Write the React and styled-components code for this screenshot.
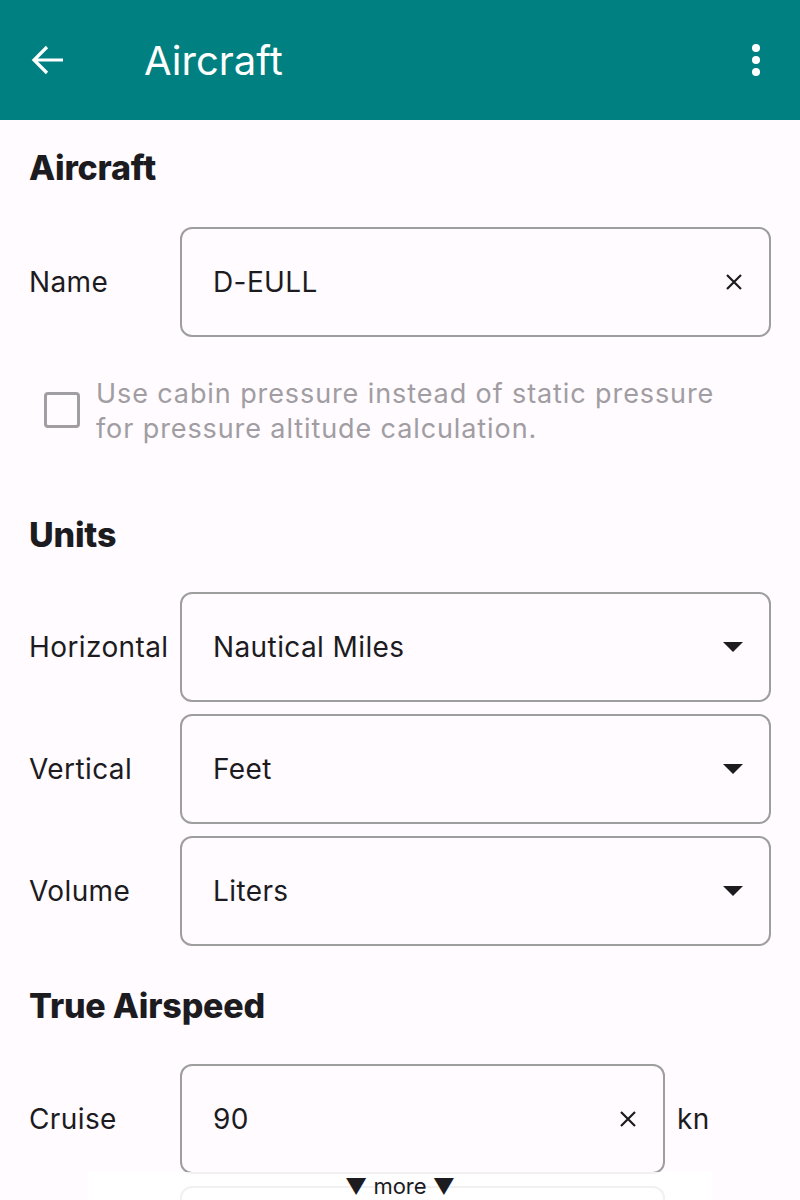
import styled, { createGlobalStyle } from 'styled-components'

const GlobalStyle = createGlobalStyle`
  body {
    margin: 0;
    background: #fffbfe;
    font-family: Inter, "Noto Sans", sans-serif;
    color: #1c1b1f;
  }
`

const Page = styled.div`
  position: relative;
  width: 800px;
  height: 1200px;
  overflow: hidden;
  background: #fffbfe;
`

const TopBar = styled.header`
  display: flex;
  align-items: center;
  height: 120px;
  padding: 0 24px 0 28px;
  background: #008080;
  color: #fff;
`

const IconButton = styled.button`
  display: flex;
  align-items: center;
  justify-content: center;
  width: 40px;
  height: 40px;
  padding: 0;
  border: none;
  background: none;
  color: inherit;
`

const BarTitle = styled.h1`
  flex: 1;
  margin: 0 0 0 76px;
  font-size: 40px;
  font-weight: 400;
`

const Content = styled.main`
  padding: 0 29px;
`

const SectionTitle = styled.h2`
  margin: ${({ top }) => top}px 0 0;
  font-size: 34px;
  font-weight: 800;
  line-height: 44px;
  letter-spacing: -0.2px;
`

const Fields = styled.div`
  display: flex;
  flex-direction: column;
  gap: 12px;
  margin: ${({ top }) => top}px 0 ${({ bottom }) => bottom}px;
`

const Row = styled.div`
  display: grid;
  grid-template-columns: 151px 1fr ${({ unit }) => (unit ? '106px' : '')};
  align-items: center;
`

const Label = styled.span`
  font-size: 28px;
  letter-spacing: 0.4px;
`

const Unit = styled(Label)`
  padding-left: 12px;
`

const Box = styled.div`
  display: flex;
  align-items: center;
  height: 110px;
  box-sizing: border-box;
  padding: 0 26px 0 31px;
  border: 2px solid #9e9e9e;
  border-radius: 12px;
  font-size: 28px;
  letter-spacing: 0.4px;
`

const Value = styled.span`
  flex: 1;
`

const CheckRow = styled.label`
  display: flex;
  align-items: flex-start;
  gap: 16px;
  margin: 39px 0 0 15px;
  color: #a09da3;
  font-size: 27px;
  line-height: 35px;
  letter-spacing: 0.9px;
`

const CheckBox = styled.span`
  flex: none;
  width: 36px;
  height: 36px;
  margin-top: 16px;
  box-sizing: border-box;
  border: 3px solid #a09da3;
  border-radius: 4px;
`

const MoreHint = styled.div`
  position: absolute;
  left: 88px;
  right: 88px;
  bottom: 0;
  height: 28px;
  background: rgba(255, 255, 255, 0.85);
  text-align: center;
  font-size: 22px;
  line-height: 28px;
  color: #1c1b1f;
`

const ClearIcon = () => (
  <svg width="18" height="18" viewBox="0 0 18 18">
    <path d="M2 2 L16 16 M16 2 L2 16" stroke="#1c1b1f" strokeWidth="2.2" />
  </svg>
)

const DropIcon = () => (
  <svg width="20" height="10" viewBox="0 0 20 10">
    <path d="M0 0 H20 L10 10 Z" fill="#1c1b1f" />
  </svg>
)

const TextField = ({ value }) => (
  <Box>
    <Value>{value}</Value>
    <ClearIcon />
  </Box>
)

const Select = ({ value }) => (
  <Box>
    <Value>{value}</Value>
    <DropIcon />
  </Box>
)

export default function App() {
  return (
    <Page>
      <GlobalStyle />
      <TopBar>
        <IconButton aria-label="Back">
          <svg width="36" height="36" viewBox="0 0 36 36">
            <path d="M33 18 H5 M17 5 L4 18 L17 31" stroke="#fff" strokeWidth="3.2" fill="none" />
          </svg>
        </IconButton>
        <BarTitle>Aircraft</BarTitle>
        <IconButton aria-label="Menu">
          <svg width="10" height="34" viewBox="0 0 10 34">
            <circle cx="5" cy="5" r="4" fill="#fff" />
            <circle cx="5" cy="17" r="4" fill="#fff" />
            <circle cx="5" cy="29" r="4" fill="#fff" />
          </svg>
        </IconButton>
      </TopBar>

      <Content>
        <SectionTitle top={26}>Aircraft</SectionTitle>
        <Fields top={37} bottom={0}>
          <Row>
            <Label>Name</Label>
            <TextField value="D-EULL" />
          </Row>
        </Fields>
        <CheckRow>
          <CheckBox />
          <span>
            Use cabin pressure instead of static pressure
            <br />
            for pressure altitude calculation.
          </span>
        </CheckRow>

        <SectionTitle top={67}>Units</SectionTitle>
        <Fields top={35} bottom={38}>
          <Row>
            <Label>Horizontal</Label>
            <Select value="Nautical Miles" />
          </Row>
          <Row>
            <Label>Vertical</Label>
            <Select value="Feet" />
          </Row>
          <Row>
            <Label>Volume</Label>
            <Select value="Liters" />
          </Row>
        </Fields>

        <SectionTitle top={0}>True Airspeed</SectionTitle>
        <Fields top={36} bottom={0}>
          <Row unit>
            <Label>Cruise</Label>
            <TextField value="90" />
            <Unit>kn</Unit>
          </Row>
          <Row unit>
            <Label>Descent</Label>
            <TextField value="" />
            <Unit>kn</Unit>
          </Row>
        </Fields>
      </Content>

      <MoreHint>▼ more ▼</MoreHint>
    </Page>
  )
}
